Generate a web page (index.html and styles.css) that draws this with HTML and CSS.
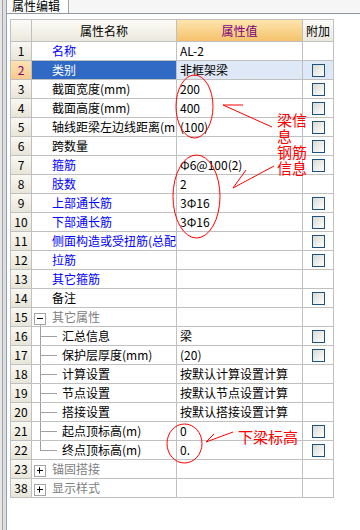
FILE: index.html
```html
<!DOCTYPE html>
<html lang="zh">
<head>
<meta charset="utf-8">
<link rel="stylesheet" href="styles.css">
</head>
<body>
<div class="strip"></div>
<div class="panel">
  <div class="tabbar"><div class="tab">属性编辑</div></div>
  <div class="content">
    <div class="grid">
      <div class="h"></div><div class="h">属性名称</div><div class="h hv">属性值</div><div class="h">附加</div>

      <div class="n">1</div><div class="k blue">名称</div><div class="v">AL-2</div><div class="a"></div>
      <div class="n sel">2</div><div class="k selk">类别</div><div class="v selv">非框架梁</div><div class="a selv"><span class="cb"></span></div>
      <div class="n">3</div><div class="k">截面宽度(mm)</div><div class="v">200</div><div class="a"><span class="cb"></span></div>
      <div class="n">4</div><div class="k">截面高度(mm)</div><div class="v">400</div><div class="a"><span class="cb"></span></div>
      <div class="n">5</div><div class="k">轴线距梁左边线距离(mm)</div><div class="v">(100)</div><div class="a"><span class="cb"></span></div>
      <div class="n">6</div><div class="k">跨数量</div><div class="v"></div><div class="a"><span class="cb"></span></div>
      <div class="n">7</div><div class="k blue">箍筋</div><div class="v">Φ6@100(2)</div><div class="a"><span class="cb"></span></div>
      <div class="n">8</div><div class="k blue">肢数</div><div class="v">2</div><div class="a"></div>
      <div class="n">9</div><div class="k blue">上部通长筋</div><div class="v">3Φ16</div><div class="a"><span class="cb"></span></div>
      <div class="n">10</div><div class="k blue">下部通长筋</div><div class="v">3Φ16</div><div class="a"><span class="cb"></span></div>
      <div class="n">11</div><div class="k blue">侧面构造或受扭筋(总配筋)</div><div class="v"></div><div class="a"><span class="cb"></span></div>
      <div class="n">12</div><div class="k blue">拉筋</div><div class="v"></div><div class="a"><span class="cb"></span></div>
      <div class="n">13</div><div class="k blue">其它箍筋</div><div class="v"></div><div class="a"></div>
      <div class="n">14</div><div class="k">备注</div><div class="v"></div><div class="a"><span class="cb"></span></div>
      <div class="n">15</div><div class="g open"><svg class="exp" width="12" height="12" viewBox="0 0 12 12"><rect x="0.5" y="0.5" width="11" height="11" fill="#fff" stroke="#a4a4a4"/><path d="M3 5.5H9" stroke="#000"/></svg><span>其它属性</span></div><div class="v"></div><div class="a"></div>
      <div class="n">16</div><div class="t">汇总信息</div><div class="v">梁</div><div class="a"><span class="cb"></span></div>
      <div class="n">17</div><div class="t">保护层厚度(mm)</div><div class="v">(20)</div><div class="a"><span class="cb"></span></div>
      <div class="n">18</div><div class="t">计算设置</div><div class="v">按默认计算设置计算</div><div class="a"></div>
      <div class="n">19</div><div class="t">节点设置</div><div class="v">按默认节点设置计算</div><div class="a"></div>
      <div class="n">20</div><div class="t">搭接设置</div><div class="v">按默认搭接设置计算</div><div class="a"></div>
      <div class="n">21</div><div class="t">起点顶标高(m)</div><div class="v">0</div><div class="a"><span class="cb"></span></div>
      <div class="n">22</div><div class="t last">终点顶标高(m)</div><div class="v">0.</div><div class="a"><span class="cb"></span></div>
      <div class="n">23</div><div class="g"><svg class="exp" width="12" height="12" viewBox="0 0 12 12"><rect x="0.5" y="0.5" width="11" height="11" fill="#fff" stroke="#a4a4a4"/><path d="M3 5.5H9M5.5 2.5V8.5" stroke="#000"/></svg><span>锚固搭接</span></div><div class="v"></div><div class="a"></div>
      <div class="n">38</div><div class="g"><svg class="exp" width="12" height="12" viewBox="0 0 12 12"><rect x="0.5" y="0.5" width="11" height="11" fill="#fff" stroke="#a4a4a4"/><path d="M3 5.5H9M5.5 2.5V8.5" stroke="#000"/></svg><span>显示样式</span></div><div class="v"></div><div class="a"></div>
    </div>
  </div>
</div>

<div class="overlay">
  <svg class="marks" width="360" height="530" viewBox="0 0 360 530">
    <g fill="none" stroke="#ff0000" stroke-width="1">
      <ellipse cx="194.5" cy="106.5" rx="18.5" ry="31.5"/>
      <ellipse cx="196.5" cy="196.5" rx="23.5" ry="41.5"/>
      <ellipse cx="184.5" cy="443.5" rx="17.5" ry="19.5"/>
      <polyline points="243,105 223,105 272,127"/>
      <polyline points="274,166 233,188 246,170"/>
      <polyline points="233,432 206,442 214,434"/>
    </g>
  </svg>
  <div class="note n1"><div>梁信息</div><div>钢筋信息</div></div>
  <div class="note n2">下梁标高</div>
</div>
</body>
</html>
```

FILE: styles.css
```css
* { box-sizing: border-box; }
html, body { margin: 0; padding: 0; }
body {
  width: 360px;
  height: 530px;
  display: flex;
  position: relative;
  overflow: hidden;
  background: #ffffff;
  color: #000000;
  font-family: "Noto Sans CJK SC", "Noto Sans", sans-serif;
  font-size: 12px;
  line-height: 18px;
}
.strip {
  width: 6px;
  flex: none;
  background: linear-gradient(to right, #e6e6e6 0 2px, #a4a4a4 2px 3px, #dedede 3px 6px);
}
.panel {
  flex: 1;
  border-left: 1px solid #8ea2bf;
  display: flex;
  flex-direction: column;
}
.tabbar {
  height: 14px;
  flex: none;
  display: flex;
  background: #f6f6f6;
  border-bottom: 1px solid #8e99a3;
}
.tab {
  width: 62px;
  background: #ffffff;
  border-right: 1px solid #9aa3ab;
  padding-left: 5px;
  line-height: 11px;
  overflow: hidden;
  white-space: nowrap;
}
.content {
  padding: 5px 0 0 3px;
}
.grid {
  display: grid;
  grid-template-columns: 20px 144px 125px 30px;
  grid-template-rows: 21px;
  grid-auto-rows: 18px;
  gap: 1px;
  width: max-content;
  background: #c0c0c0;
  border: 1px solid #c0c0c0;
}
.grid > div {
  background: #ffffff;
  overflow: hidden;
  white-space: nowrap;
}
.grid > .h {
  background: linear-gradient(#fcfbf7, #ebe9de);
  text-align: center;
  line-height: 21px;
}
.grid > .hv {
  background: linear-gradient(#fde4ae, #f4c26b);
  color: #800080;
}
.grid > .n {
  background: linear-gradient(#f9f8f3, #e8e5d8);
  text-align: center;
}
.grid > .sel {
  background: linear-gradient(#fde3b2, #f9c98a);
  color: #800080;
}
.grid > .k { padding-left: 20px; }
.blue { color: #0000ff; }
.grid > .selk {
  background: #316ac5;
  color: #ffffff;
}
.grid > .v { padding-left: 3px; }
.grid > .selv { background: #dfe8f6; }
.grid > .a {
  display: flex;
  align-items: center;
  justify-content: center;
}
.cb {
  width: 13px;
  height: 13px;
  border: 1px solid #1c5180;
  background: linear-gradient(135deg, #d9d9d3, #ffffff);
}
.grid > .g {
  display: flex;
  align-items: flex-start;
  padding-left: 2px;
  color: #808080;
}
.exp {
  display: block;
  flex: none;
  margin: 5px 6px 0 0;
}
.grid > .g.open {
  background: #ffffff linear-gradient(#a0a0a0, #a0a0a0) no-repeat 8px 17px / 1px 1px;
}
.grid > .t {
  padding-left: 30px;
  background-color: #ffffff;
  background-image: linear-gradient(#a0a0a0, #a0a0a0), linear-gradient(#a0a0a0, #a0a0a0);
  background-repeat: no-repeat;
  background-position: 8px 0, 8px 9px;
  background-size: 1px 100%, 17px 1px;
}
.grid > .t.last {
  background-size: 1px 10px, 17px 1px;
}
.overlay {
  position: absolute;
  left: 0;
  top: 0;
  width: 360px;
  height: 530px;
  pointer-events: none;
}
.marks { display: block; }
.note {
  position: absolute;
  color: #ff0000;
  font-size: 15px;
  line-height: 16px;
}
.n1 {
  left: 277px;
  top: 112px;
  width: 30px;
}
.n2 {
  left: 238px;
  top: 429px;
  white-space: nowrap;
}
```
